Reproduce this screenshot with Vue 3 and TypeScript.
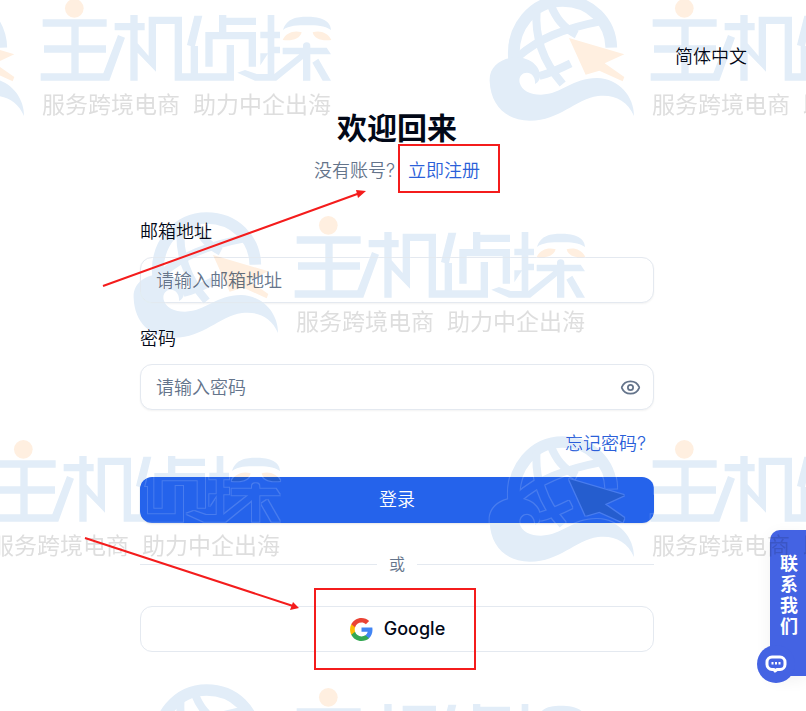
<script setup lang="ts">
import { ref } from 'vue'

interface MarkPosition {
  x: number
  y: number
}

const email = ref('')
const password = ref('')
const showPassword = ref(false)

const marks: MarkPosition[] = [
  { x: -130, y: 0 },
  { x: 480, y: 0 },
  { x: 124, y: 217 },
  { x: -181, y: 441 },
  { x: 480, y: 441 },
  { x: 124, y: 689 },
]
</script>

<template>
  <div class="page">
    <header class="topbar">
      <button type="button" class="language">简体中文</button>
    </header>

    <main class="card">
      <h1>欢迎回来</h1>
      <p class="signup">没有账号? <a href="#register">立即注册</a></p>

      <form @submit.prevent>
        <div class="field">
          <label for="email">邮箱地址</label>
          <input id="email" v-model="email" type="email" placeholder="请输入邮箱地址" />
        </div>
        <div class="field">
          <label for="password">密码</label>
          <div class="password-box">
            <input
              id="password"
              v-model="password"
              :type="showPassword ? 'text' : 'password'"
              placeholder="请输入密码"
            />
            <button type="button" class="eye" aria-label="显示密码" @click="showPassword = !showPassword">
              <svg viewBox="0 0 24 24" width="21" height="21" fill="none" stroke="currentColor" stroke-width="2" stroke-linecap="round" stroke-linejoin="round">
                <path d="M2.06 12.35a1 1 0 0 1 0-.7 10.75 10.75 0 0 1 19.88 0 1 1 0 0 1 0 .7 10.75 10.75 0 0 1-19.88 0" />
                <circle cx="12" cy="12" r="3" />
              </svg>
            </button>
          </div>
        </div>
        <a class="forgot" href="#forgot">忘记密码?</a>
        <button type="submit" class="submit">登录</button>
      </form>

      <div class="divider"><span>或</span></div>

      <button type="button" class="google">
        <svg viewBox="0 0 24 24" width="25" height="25">
          <path fill="#4285f4" d="M22.56 12.25c0-.78-.07-1.53-.2-2.25H12v4.26h5.92c-.26 1.37-1.04 2.53-2.21 3.31v2.77h3.57c2.08-1.92 3.28-4.74 3.28-8.09z" />
          <path fill="#34a853" d="M12 23c2.97 0 5.46-.98 7.28-2.66l-3.57-2.77c-.98.66-2.23 1.06-3.71 1.06-2.86 0-5.29-1.93-6.16-4.53H2.18v2.84C3.99 20.53 7.7 23 12 23z" />
          <path fill="#fbbc05" d="M5.84 14.09c-.22-.66-.35-1.36-.35-2.09s.13-1.43.35-2.09V7.07H2.18C1.43 8.55 1 10.22 1 12s.43 3.45 1.18 4.93l3.66-2.84z" />
          <path fill="#ea4335" d="M12 5.38c1.62 0 3.06.56 4.21 1.64l3.15-3.15C17.45 2.09 14.97 1 12 1 7.7 1 3.99 3.47 2.18 7.07l3.66 2.84c.87-2.6 3.3-4.53 6.16-4.53z" />
        </svg>
        <span>Google</span>
      </button>
    </main>

    <button type="button" class="contact">
      <span class="contact-text">联系我们</span>
      <span class="contact-bubble">
        <svg viewBox="0 0 22 20" width="22" height="20" fill="none" stroke="#fff" stroke-width="3" stroke-linejoin="round">
          <path d="M7 3h8a5 5 0 0 1 5 5v2.500a5 5 0 0 1-5 5h-3l-2 1.500-1-1.500H7a5 5 0 0 1-5-5V8a5 5 0 0 1 5-5z" />
          <path d="M6.500 9.300h2M10 9.300h2M13.500 9.300h2" stroke-width="2.400" />
        </svg>
      </span>
    </button>

    <svg class="overlay" aria-hidden="true">
      <defs>
        <filter id="edge" x="-5%" y="-5%" width="110%" height="110%">
          <feMorphology in="SourceAlpha" operator="dilate" radius="1" result="wide" />
          <feComposite in="wide" in2="SourceAlpha" operator="out" result="rim" />
          <feFlood flood-color="#fff" flood-opacity="0.16" />
          <feComposite in2="rim" operator="in" />
        </filter>
        <g id="mark-cool">
          <g transform="scale(0.33333)">
            <g fill="none" stroke="#e2edf8">
              <path d="M102 176C94 82 160 3 248 3c84 0 144 62 146 140" stroke-width="35" />
              <path d="M170 28C164 110 186 180 248 252" stroke-width="24" />
              <path d="M212 14C228 54 248 82 290 104" stroke-width="24" />
              <path d="M112 172C176 116 246 86 372 62" stroke-width="24" />
              <path d="M178 228C208 220 240 206 272 190" stroke-width="24" />
            </g>
            <path fill="#e2edf8" d="M29 244C26 198 66 172 112 172c42 2 70 30 68 58-1 10-6 17-15 22 2-20-10-34-24-34-16 0-26 14-22 30 6 24 32 36 64 36 64-2 94-50 168-50 68 2 112 58 111 114-20-48-62-66-108-60-70 10-114 74-204 74C78 362 32 316 29 244z" />
            <g transform="translate(390)" fill="#e2edf8">
              <path d="M128 58H320V80H236V136H318V158H236V220H310L354 105 375 113 328 242H122V220H214V158H132V136H214V80H128z" />
              <path d="M344 69H391V45H413V69H434V91H413V130L446 168V50H546V220H572V138L561 135 583 47H607L585 138H594V220H680V135H702V242H524V72H468V215L413 158V242H391V91H344z" />
              <path d="M657 45H679V53H768V75H679V96H768V200H746V118H638V200H616V96H657z" />
              <path d="M781 95H803V45H823V95H840V115H823V140H840V160H823V222L898 163H848V143H909V138a11 11 0 0 1 22 0V143H980L993 163H931V242H909V177L829 242H765L712 218 735 210 770 222H803V162L781 196V160H803V115H781z" />
              <path d="M955 176L993 242H968L937 188z" />
              <path d="M849 90C860 54 892 50 920 50c32 0 72 6 73 40-20-13-42-14-71-14-30 0-54 0-73 14z" />
            </g>
          </g>
        </g>
        <g id="mark-warm">
          <g transform="scale(0.33333)" fill="#ffefe0">
            <path d="M267 114L433 163 374 190 433 231 428 244 358 212 317 224z" />
            <circle cx="613" cy="25" r="28" />
            <path d="M1238 120C1248 98 1272 90 1295 97 1290 117 1266 124 1238 120zM1384 120C1374 98 1350 90 1328 97 1332 117 1356 124 1384 120z" />
          </g>
        </g>
      </defs>
      <g v-for="(m, i) in marks" :key="i" filter="url(#edge)">
        <use href="#mark-cool" :x="m.x" :y="m.y" />
        <use href="#mark-warm" :x="m.x" :y="m.y" />
      </g>
    </svg>
    <svg class="overlay cool" aria-hidden="true">
      <use v-for="(m, i) in marks" :key="i" href="#mark-cool" :x="m.x" :y="m.y" />
    </svg>
    <svg class="overlay warm">
      <g v-for="(m, i) in marks" :key="i">
        <use href="#mark-warm" :x="m.x" :y="m.y" />
        <text class="slogan" :x="m.x + 172" :y="m.y + 113">服务跨境电商</text>
        <text class="slogan" :x="m.x + 323" :y="m.y + 113">助力中企出海</text>
      </g>
    </svg>
    <svg class="overlay" aria-hidden="true">
      <g fill="none" stroke="#f41c1c" stroke-width="2">
        <rect x="399" y="145" width="100" height="47" />
        <rect x="315" y="589" width="160" height="80" />
        <path d="M103 286L360 193M85 538L293 606" />
      </g>
      <path fill="#f41c1c" d="M366 191L358 198 356 190zM299 608L290 610 293 602z" />
    </svg>
  </div>
</template>

<style>
body {
  margin: 0;
  background: #fff;
}
</style>

<style scoped>
.page {
  position: relative;
  isolation: isolate;
  box-sizing: border-box;
  min-height: 100vh;
  overflow: hidden;
  padding: 43px 12px 59px 0;
  background: #fff;
  color: #020817;
  font-family: Inter, "Noto Sans CJK SC", sans-serif;
  font-size: 18px;
  font-weight: 350;
  line-height: 28px;
}
button,
input {
  box-sizing: border-box;
  font: inherit;
  color: inherit;
}
button {
  border: 0;
  padding: 0;
  background: none;
  cursor: pointer;
}
a {
  color: #2b5fd9;
  text-decoration: none;
}
.topbar {
  display: flex;
  justify-content: flex-end;
  padding-right: 47px;
}
.card {
  display: flex;
  flex-direction: column;
  max-width: 514px;
  margin: 39px auto 0;
}
h1 {
  margin: 0;
  font-size: 30px;
  font-weight: 700;
  line-height: 36px;
  text-align: center;
}
.signup {
  margin: 11px 0 33px;
  color: #64748b;
  text-align: center;
}
.signup a {
  margin-left: 8px;
}
form,
.field {
  display: flex;
  flex-direction: column;
}
.field {
  gap: 11px;
  margin-bottom: 22px;
}
.field + .field {
  margin-bottom: 20px;
}
input {
  width: 100%;
  height: 46px;
  padding: 0 15px;
  border: 1px solid #e4e9f0;
  border-radius: 12px;
  background: #fff;
  box-shadow: 0 1px 2px rgba(0, 0, 0, 0.05);
}
input::placeholder {
  color: #64748b;
  opacity: 1;
}
.password-box {
  position: relative;
}
.password-box input {
  padding-right: 48px;
}
.eye {
  position: absolute;
  top: 0;
  right: 13px;
  display: flex;
  align-items: center;
  height: 100%;
  color: #64748b;
}
.forgot {
  align-self: flex-end;
  margin-right: 8px;
}
.submit {
  height: 46px;
  margin-top: 19px;
  border-radius: 12px;
  background: #2563eb;
  box-shadow: 0 1px 2px rgba(0, 0, 0, 0.1);
  color: #fff;
}
.divider {
  display: flex;
  align-items: center;
  gap: 12px;
  margin: 27px 0 28px;
  color: #64748b;
  font-size: 16px;
}
.divider::before,
.divider::after {
  content: "";
  flex: 1;
  height: 1px;
  background: #e4e9f0;
}
.google {
  display: flex;
  align-items: center;
  justify-content: center;
  gap: 10px;
  height: 46px;
  border: 1px solid #e4e9f0;
  border-radius: 12px;
  font-weight: 500;
}
.contact {
  position: absolute;
  right: 0;
  bottom: 35px;
  box-sizing: border-box;
  width: 36px;
  height: 146px;
  padding: 20px 0 0 2px;
  border-radius: 10px 0 0 0;
  background: #4463e3;
  box-shadow: 0 4px 16px rgba(0, 0, 0, 0.06);
  color: #fff;
}
.contact-text {
  display: block;
  width: 18px;
  height: 120px;
  margin: 0 auto;
  font-weight: 700;
  line-height: 21px;
}
.contact-bubble {
  position: absolute;
  left: -13px;
  bottom: -7px;
  display: flex;
  align-items: center;
  justify-content: center;
  width: 38px;
  height: 38px;
  border-radius: 50%;
  background: #4463e3;
}
.overlay {
  position: absolute;
  inset: 0;
  width: 100%;
  height: 100%;
  pointer-events: none;
}
.cool {
  mix-blend-mode: darken;
}
.warm {
  mix-blend-mode: multiply;
}
.slogan {
  fill: #dedede;
  font-size: 23px;
  font-weight: 400;
}
</style>
